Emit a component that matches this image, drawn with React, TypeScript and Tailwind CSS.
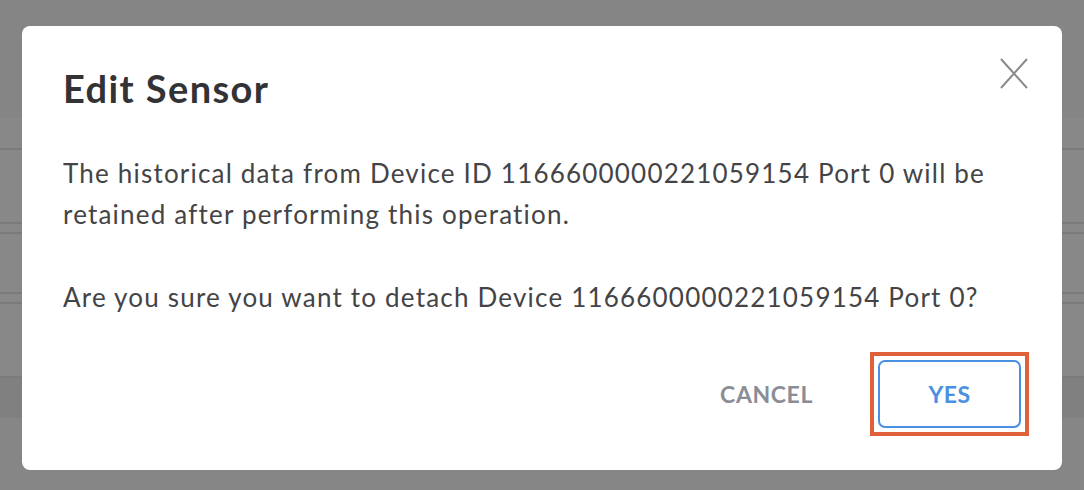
import React from "react";

export default function App() {
  return (
    <div className="relative w-[1084px] h-[490px] overflow-hidden bg-[#888888]" style={{ fontFamily: "Lato, 'Open Sans', sans-serif" }}>
      {/* background page (dimmed) */}
      <div className="flex flex-col w-full h-full">
        <div className="h-[118px] bg-[#858586]" />
        <div className="h-[32px] border-b-2 border-[#7b7b7b]" />
        <div className="h-[74px] border-b-2 border-[#7b7b7b]" />
        <div className="h-[10px] border-b-2 border-[#7b7b7b]" />
        <div className="h-[60px] border-b-2 border-[#7b7b7b]" />
        <div className="h-[10px] border-b-2 border-[#7b7b7b]" />
        <div className="h-[74px] border-b-2 border-[#7b7b7b]" />
        <div className="h-[40px] bg-[#808081]" />
        <div className="flex-1 bg-[#868686]" />
      </div>

      {/* modal */}
      <div className="absolute left-[22px] top-[26px] w-[1040px] h-[444px] bg-white rounded-[8px] flex flex-col pl-[41px] pr-[33px]">
        <div className="flex items-start justify-between pt-[40px]">
          <h2 className="text-[38px] leading-[44px] font-bold text-[#333336] tracking-[1.4px]">Edit Sensor</h2>
          <button className="mt-[-13px] mr-[-5px] w-[40px] h-[40px] flex items-center justify-center">
            <svg width="28" height="31" viewBox="0 0 28 31" fill="none" stroke="#8a8a8a" strokeWidth="2">
              <path d="M1 1 L27 30 M27 1 L1 30" />
            </svg>
          </button>
        </div>
        <div className="mt-[43px] text-[26px] leading-[41px] text-[#444446] tracking-[1.2px] pr-[0px]">
          <p>The historical data from Device ID 1166600000221059154 Port 0 will be retained after performing this operation.</p>
          <p className="mt-[42px]">Are you sure you want to detach Device 1166600000221059154 Port 0?</p>
        </div>
        <div className="mt-auto mb-[34px] flex items-center justify-end gap-[57px]">
          <button className="text-[23px] font-bold text-[#8a8d96] tracking-[0.6px]">CANCEL</button>
          <div className="border-[4px] border-[#e0603a] p-[4px]">
            <button className="w-[143px] h-[68px] rounded-[7px] border-2 border-[#4a90e2] text-[23px] font-bold text-[#4a90e2] tracking-[0.5px]">YES</button>
          </div>
        </div>
      </div>
    </div>
  );
}
